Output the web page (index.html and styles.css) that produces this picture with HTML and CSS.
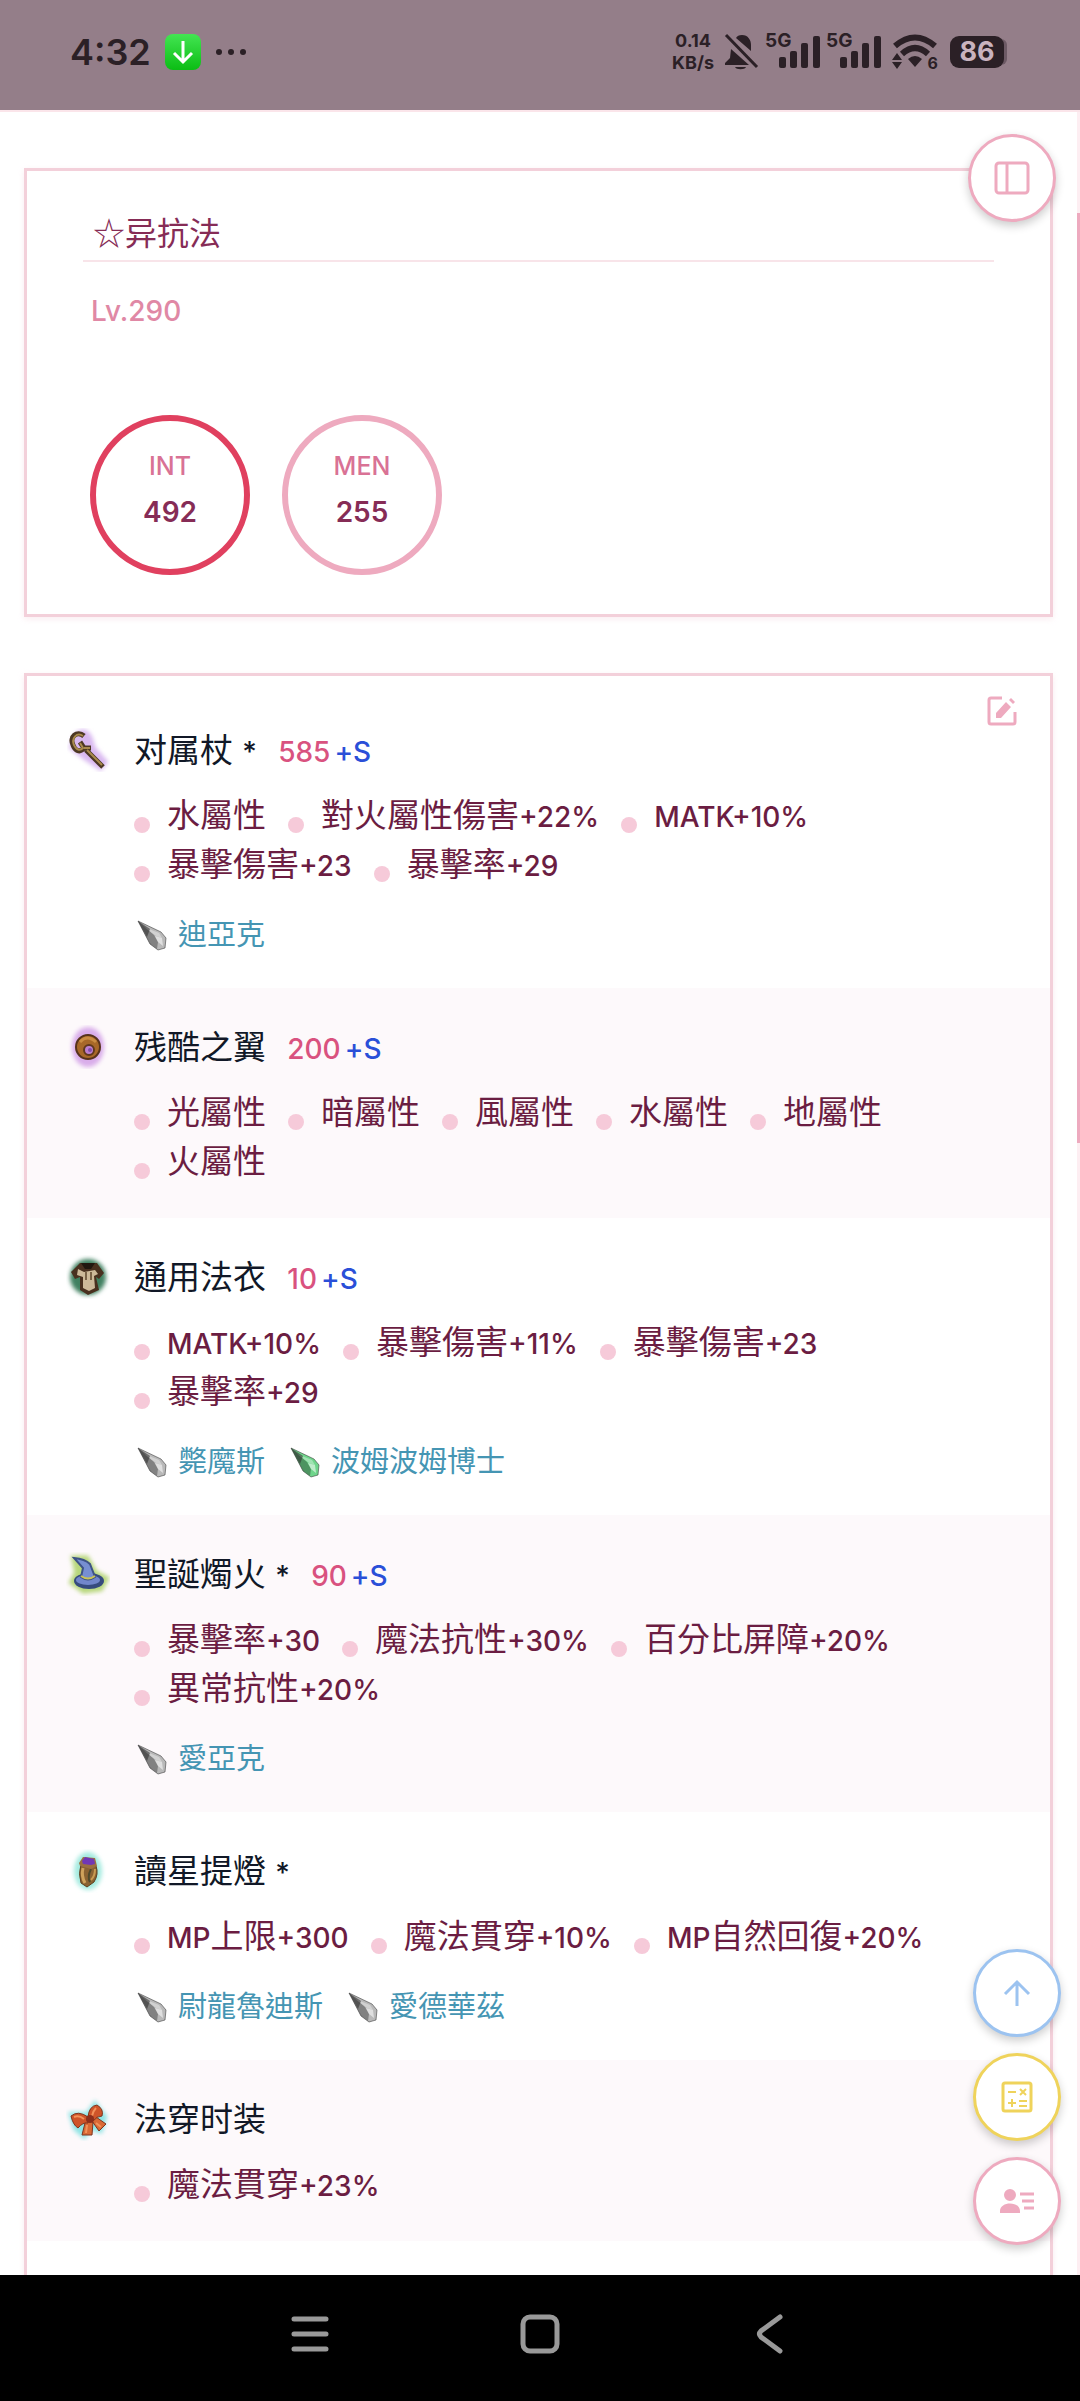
FILE: index.html
```
<!DOCTYPE html>
<html lang="zh-Hant">
<head>
    <meta charset="utf-8">
    <meta name="viewport" content="width=device-width, initial-scale=1">
    <title>☆异抗法</title>
    <link rel="stylesheet" href="styles.css">
</head>
<body>
    <!-- shared icon shapes -->
    <svg class="defs" width="0" height="0" aria-hidden="true">
        <defs>
            <filter id="glow" x="-30%" y="-30%" width="160%" height="160%"><feGaussianBlur stdDeviation="2"/></filter>
            <symbol id="crystal" viewBox="0 0 36 36">
                <path d="M4 4 L27 15 L32 21 L31 31 L24 33 L16 27 Z" fill="currentColor"/>
                <path d="M4 4 L20 18 L24 25 L23 32 L16 27 Z" fill="#000" opacity=".3"/>
                <path d="M10 10 L25 16 L28 21 L22 19 Z" fill="#fff" opacity=".35"/>
                <path d="M21 19 L28 21 L29 29 L24 25 Z" fill="#fff" opacity=".55"/>
                <path d="M4 4 L27 15 L32 21 L31 31 L24 33 L16 27 Z" fill="none" stroke="#333" stroke-opacity=".55" stroke-width="1"/>
                <path d="M4 4 L16 12 L13 20 Z" fill="#333" opacity=".6"/>
            </symbol>
            <symbol id="signal" viewBox="0 0 56 38">
                <rect x="14" y="24" width="7" height="11" rx="2"/>
                <rect x="25" y="18" width="7" height="17" rx="2"/>
                <rect x="36" y="10" width="7" height="25" rx="2"/>
                <rect x="48" y="3" width="7" height="32" rx="2"/>
            </symbol>
        </defs>
    </svg>

    <header class="status-bar">
        <span class="clock">4:32</span>
        <svg class="app-badge" viewBox="0 0 36 36">
            <defs>
                <linearGradient id="green" x1="0" y1="0" x2="0" y2="1"><stop offset="0" stop-color="#43e552"/><stop offset="1" stop-color="#0bbd14"/></linearGradient>
            </defs>
            <rect width="36" height="36" rx="8" fill="url(#green)"/>
            <path d="M18 7v21M9 19l9 9 9-9" fill="none" stroke="#fff" stroke-width="3"/>
        </svg>
        <svg class="more" viewBox="0 0 32 8"><circle cx="4" cy="4" r="3"/><circle cx="16" cy="4" r="3"/><circle cx="28" cy="4" r="3"/></svg>
        <div class="status-right">
            <span class="speed">0.14<br>KB/s</span>
            <svg class="bell" viewBox="0 0 36 38">
                <path d="M12 5C13 3 15 2 18 2C24 2 27 7 27 12V18ZM7 16L25 32H1V30L6 25Z"/>
                <path d="M11 34h11c-1 3-10 3-11 0Z"/>
                <path d="M2 2L33 34" stroke="#2b2026" stroke-width="3"/>
            </svg>
            <span class="network"><b>5G</b><svg viewBox="0 0 56 38"><use href="#signal"/></svg></span>
            <span class="network"><b>5G</b><svg viewBox="0 0 56 38"><use href="#signal"/></svg></span>
            <span class="wifi">
                <svg viewBox="0 0 46 38">
                    <path d="M3 13Q23 -4 43 13" fill="none" stroke="#2b2026" stroke-width="6"/>
                    <path d="M10 21Q23 9 36 21" fill="none" stroke="#2b2026" stroke-width="6"/>
                    <path d="M16 26Q23 20 30 26L23 34Z"/>
                    <path d="M0 27L5 20L10 27ZM0 29L5 36L10 29Z"/>
                </svg>
                <b>6</b>
            </span>
            <span class="battery">86</span>
        </div>
    </header>

    <main class="page">
        <section class="card profile">
            <h1>☆异抗法</h1>
            <p class="level">Lv.290</p>
            <div class="stats">
                <div class="stat main"><span>INT</span><strong>492</strong></div>
                <div class="stat"><span>MEN</span><strong>255</strong></div>
            </div>
        </section>

        <section class="card equipment">
            <button type="button" class="edit" aria-label="edit">
                <svg viewBox="0 0 32 32">
                    <path d="M16 3H5a2 2 0 0 0-2 2v22a2 2 0 0 0 2 2h22a2 2 0 0 0 2-2V17" fill="none" stroke="currentColor" stroke-width="3"/>
                    <path d="M10 23v-5L20 7l5 5L15 23ZM23 5l2-2 4 4-2 2Z" fill="currentColor"/>
                </svg>
            </button>

            <article class="item">
                <svg class="item-icon" viewBox="0 0 44 44">
                    <path d="M13 10Q18 4 21 12L24 22L38 38L20 26L10 18Z" fill="#d9b8f0" stroke="#d9b8f0" stroke-width="12" filter="url(#glow)"/>
                    <path d="M18 8C11 2 3 9 7 17C9 23 14 25 18 20L14 14M18 20L25 20M20 22L37 39" fill="none" stroke="#4d3824" stroke-width="5"/>
                    <path d="M17 8C11 4 5 10 8 17C10 22 14 23 17 20L14 15M18 20L24 20M21 22L36 37" fill="none" stroke="#a98a4c" stroke-width="2"/>
                </svg>
                <div class="item-body">
                    <h2>对属杖 <span class="latin">*</span> <span class="value">585</span><span class="refine">+S</span></h2>
                    <ul class="attrs">
                        <li>水屬性</li>
                        <li>對火屬性傷害<span class="latin">+22%</span></li>
                        <li><span class="latin">MATK+10%</span></li>
                        <li>暴擊傷害<span class="latin">+23</span></li>
                        <li>暴擊率<span class="latin">+29</span></li>
                    </ul>
                    <div class="crystals">
                        <span class="crystal"><svg><use href="#crystal"/></svg>迪亞克</span>
                    </div>
                </div>
            </article>

            <article class="item">
                <svg class="item-icon" viewBox="0 0 44 44">
                    <ellipse cx="22" cy="22" rx="16" ry="20" fill="#d9adea" filter="url(#glow)"/>
                    <circle cx="22" cy="22" r="12" fill="#a76828" stroke="#57331c" stroke-width="2"/>
                    <path d="M14 17Q21 9 30 17" fill="none" stroke="#c98c42" stroke-width="3"/>
                    <circle cx="23" cy="25" r="5" fill="#bc7fd0" stroke="#60381e" stroke-width="2"/>
                    <circle cx="24" cy="25" r="2" fill="#8250ac"/>
                </svg>
                <div class="item-body">
                    <h2>残酷之翼 <span class="value">200</span><span class="refine">+S</span></h2>
                    <ul class="attrs">
                        <li>光屬性</li>
                        <li>暗屬性</li>
                        <li>風屬性</li>
                        <li>水屬性</li>
                        <li>地屬性</li>
                        <li>火屬性</li>
                    </ul>
                </div>
            </article>

            <article class="item">
                <svg class="item-icon" viewBox="0 0 44 44">
                    <circle cx="22" cy="22" r="18" fill="#3f8060" filter="url(#glow)"/>
                    <path d="M14 8L31 8L38 18L33 24L30 22L33 35L22 40L14 35L14 22L9 24L5 17Z" fill="#49301f"/>
                    <path d="M12 14L18 17L29 15L32 19L28 21L29 33L23 36L17 33L17 22L11 20Z" fill="#cdb999"/>
                    <path d="M15 8h14l-4 6-6 0Z" fill="#21170f"/>
                    <path d="M20 17v8M25 17v8" stroke="#7a6348" stroke-width="2"/>
                </svg>
                <div class="item-body">
                    <h2>通用法衣 <span class="value">10</span><span class="refine">+S</span></h2>
                    <ul class="attrs">
                        <li><span class="latin">MATK+10%</span></li>
                        <li>暴擊傷害<span class="latin">+11%</span></li>
                        <li>暴擊傷害<span class="latin">+23</span></li>
                        <li>暴擊率<span class="latin">+29</span></li>
                    </ul>
                    <div class="crystals">
                        <span class="crystal"><svg><use href="#crystal"/></svg>斃魔斯</span>
                        <span class="crystal green"><svg><use href="#crystal"/></svg>波姆波姆博士</span>
                    </div>
                </div>
            </article>

            <article class="item">
                <svg class="item-icon" viewBox="0 0 44 44">
                    <path d="M9 7L20 7L28 21L39 27L34 36L18 38L7 30L12 21Z" fill="#b7d77b" stroke="#b7d77b" stroke-width="7" filter="url(#glow)"/>
                    <ellipse cx="23" cy="29" rx="15" ry="8" fill="#364b7e"/>
                    <ellipse cx="22" cy="28" rx="12" ry="5" fill="#7186cb"/>
                    <path d="M8 6Q19 7 24 12L29 25Q22 30 15 25L17 16Z" fill="#778fd2" stroke="#3e5386" stroke-width="2"/>
                    <path d="M15 24Q22 29 29 24" fill="none" stroke="#c9c357" stroke-width="2"/>
                </svg>
                <div class="item-body">
                    <h2>聖誕燭火 <span class="latin">*</span> <span class="value">90</span><span class="refine">+S</span></h2>
                    <ul class="attrs">
                        <li>暴擊率<span class="latin">+30</span></li>
                        <li>魔法抗性<span class="latin">+30%</span></li>
                        <li>百分比屏障<span class="latin">+20%</span></li>
                        <li>異常抗性<span class="latin">+20%</span></li>
                    </ul>
                    <div class="crystals">
                        <span class="crystal"><svg><use href="#crystal"/></svg>愛亞克</span>
                    </div>
                </div>
            </article>

            <article class="item">
                <svg class="item-icon" viewBox="0 0 44 44">
                    <ellipse cx="22" cy="22" rx="14" ry="19" fill="#a5ebe0" filter="url(#glow)"/>
                    <path d="M15 15Q12 25 15 34L21 38L28 33Q33 25 30 17Z" fill="#8a6232" stroke="#5e4020" stroke-width="1"/>
                    <path d="M17 19Q15 27 19 34" fill="none" stroke="#cfa25c" stroke-width="3"/>
                    <path d="M25 20Q21 28 24 33" fill="none" stroke="#4f4a2c" stroke-width="2"/>
                    <path d="M29 20Q29 27 25 31" fill="none" stroke="#c99a51" stroke-width="2"/>
                    <path d="M13 14L17 8L29 9L31 17L25 20L14 17Z" fill="#9b7040"/>
                    <path d="M16 12L19 8L28 10L29 15L25 16L17 15Z" fill="#7137b5"/>
                </svg>
                <div class="item-body">
                    <h2>讀星提燈 <span class="latin">*</span></h2>
                    <ul class="attrs">
                        <li><span class="latin">MP</span>上限<span class="latin">+300</span></li>
                        <li>魔法貫穿<span class="latin">+10%</span></li>
                        <li><span class="latin">MP</span>自然回復<span class="latin">+20%</span></li>
                    </ul>
                    <div class="crystals">
                        <span class="crystal"><svg><use href="#crystal"/></svg>尉龍魯迪斯</span>
                        <span class="crystal"><svg><use href="#crystal"/></svg>愛德華茲</span>
                    </div>
                </div>
            </article>

            <article class="item">
                <svg class="item-icon" viewBox="0 0 44 44">
                    <path d="M6 18L22 18L29 8L38 20L34 33L24 30L18 38L10 31Z" fill="#8fe4e4" stroke="#8fe4e4" stroke-width="6" filter="url(#glow)"/>
                    <path d="M20 22L16 38L26 38L27 25ZM26 24L33 34L40 27L30 20Z" fill="#d96a35" stroke="#7e3520" stroke-width="1"/>
                    <path d="M22 20Q12 13 5 19Q7 28 12 31Q17 25 22 26ZM22 20Q23 9 31 8Q38 12 36 19Q31 19 27 24Z" fill="#cf5429" stroke="#7e3520" stroke-width="1"/>
                    <path d="M8 20Q13 18 18 22M30 11Q27 14 26 19M21 28L20 36M30 26L35 30" fill="none" stroke="#f3925a" stroke-width="2"/>
                    <circle cx="24" cy="22" r="4" fill="#8d2f1b"/>
                </svg>
                <div class="item-body">
                    <h2>法穿时装</h2>
                    <ul class="attrs">
                        <li>魔法貫穿<span class="latin">+23%</span></li>
                    </ul>
                </div>
            </article>
        </section>

        <div class="scroll-track"><div class="scroll-thumb"></div></div>

        <button type="button" class="fab fab-menu" aria-label="sidebar">
            <svg viewBox="0 0 36 36"><rect x="2" y="3" width="32" height="30" rx="3"/><path d="M13 3v30"/></svg>
        </button>
        <div class="fab-group">
            <button type="button" class="fab blue" aria-label="top">
                <svg viewBox="0 0 36 36"><path d="M18 31V7M6 19L18 7l12 12"/></svg>
            </button>
            <button type="button" class="fab yellow" aria-label="calculator">
                <svg viewBox="0 0 36 36"><rect x="4" y="4" width="28" height="28" rx="2"/><path d="M9 13h8M21 10l6 6M27 10l-6 6M9 24h8M13 20v8M20 22h8M20 27h8" stroke-width="2"/></svg>
            </button>
            <button type="button" class="fab" aria-label="character">
                <svg viewBox="0 0 36 36"><path class="solid" d="M11 6a6 6 0 1 1 0 12a6 6 0 1 1 0-12ZM1 30v-2c0-10 20-10 20 0v2Z"/><path d="M21 11h14M23 18h12M25 25h10"/></svg>
            </button>
        </div>
    </main>

    <nav class="nav-bar">
        <button type="button" aria-label="menu"><svg viewBox="0 0 44 44"><path d="M6 7h32M6 22h32M6 37h32"/></svg></button>
        <button type="button" aria-label="home"><svg viewBox="0 0 44 44"><rect x="5" y="5" width="34" height="34" rx="7"/></svg></button>
        <button type="button" aria-label="back"><svg viewBox="0 0 44 44"><path d="M32 5L13 19q-3 3 0 6L32 39"/></svg></button>
    </nav>
</body>
</html>
```
FILE: styles.css
```
* {
    box-sizing: border-box;
}

body {
    margin: 0;
    height: 100vh;
    display: flex;
    flex-direction: column;
    font-family: Inter, "Noto Sans CJK TC", sans-serif;
    color: #6b1d42;
    background-color: #fff;
}

h1,
h2,
p,
ul {
    margin: 0;
    padding: 0;
    font-weight: 400;
}

button {
    padding: 0;
    border: none;
    background: none;
    cursor: pointer;
}

.defs {
    position: absolute;
}

/* status bar */
.status-bar {
    flex: none;
    display: flex;
    align-items: center;
    height: 110px;
    padding: 0 76px 6px 70px;
    background-color: #947e89;
    color: #2b2026;
    fill: #2b2026;
}

.clock {
    font-size: 36px;
    font-weight: 600;
}

.app-badge {
    width: 36px;
    height: 36px;
    margin-left: 14px;
}

.more {
    width: 32px;
    height: 8px;
    margin-left: 14px;
}

.status-right {
    display: flex;
    align-items: center;
    margin-left: auto;
}

.speed {
    font-size: 18px;
    line-height: 22px;
    font-weight: 700;
    text-align: center;
}

.bell {
    width: 36px;
    height: 38px;
    margin-left: 10px;
}

.network {
    position: relative;
    width: 56px;
    height: 38px;
    margin-left: 5px;
}

.network b {
    position: absolute;
    top: -2px;
    left: 0;
    font-size: 19px;
    line-height: 20px;
}

.network svg {
    width: 56px;
    height: 38px;
}

.wifi {
    position: relative;
    width: 46px;
    height: 38px;
    margin-left: 10px;
}

.wifi svg {
    width: 46px;
    height: 38px;
}

.wifi b {
    position: absolute;
    right: 0;
    bottom: 0;
    font-size: 16px;
    line-height: 16px;
}

.battery {
    width: 54px;
    height: 32px;
    margin-left: 12px;
    border-radius: 9px;
    background-color: #2b2026;
    box-shadow: 6px 0 0 -3px #6d5a65;
    color: #c9b3bf;
    font-size: 27px;
    line-height: 32px;
    font-weight: 700;
    text-align: center;
}

/* page */
.page {
    position: relative;
    flex: 1;
    min-height: 0;
    padding: 56px 27px 0 24px;
    border-top: 2px solid #fbe5ea;
    overflow: hidden;
}

.card {
    position: relative;
    border: 3px solid #f3d0da;
    box-shadow: 0 2px 6px rgba(243, 208, 218, 0.4);
}

.profile {
    margin-bottom: 56px;
    padding: 36px 56px 39px;
}

.profile h1 {
    padding: 0 10px 4px;
    border-bottom: 2px solid #f8e4e9;
    color: #862c56;
    font-family: "Noto Sans CJK TC", sans-serif;
    font-size: 32px;
    line-height: 49px;
}

.level {
    margin: 28px 8px 0;
    color: #e088a5;
    font-size: 28px;
    line-height: 42px;
    font-weight: 500;
}

.stats {
    display: flex;
    gap: 32px;
    margin: 83px 7px 0;
}

.stat {
    display: flex;
    flex-direction: column;
    align-items: center;
    width: 160px;
    height: 160px;
    padding-top: 22px;
    border: 6px solid #eeaabf;
    border-radius: 50%;
}

.stat.main {
    border-color: #e0405f;
}

.stat span {
    color: #d97295;
    font-size: 25px;
    line-height: 46px;
    font-weight: 500;
}

.stat strong {
    color: #862c56;
    font-size: 28px;
    line-height: 46px;
    font-weight: 600;
}

/* equipment list */
.equipment {
    padding-top: 15px;
    padding-bottom: 80px;
}

.edit {
    position: absolute;
    top: 19px;
    right: 32px;
    color: #eeaabf;
}

.edit svg {
    display: block;
    width: 32px;
    height: 32px;
}

.item {
    display: flex;
    gap: 24px;
    padding: 34px 41px 32px 39px;
}

.item:nth-of-type(even) {
    background-color: #fdf9fb;
}

.item-icon {
    flex: none;
    width: 44px;
    height: 44px;
    margin-top: 3px;
}

.item-body {
    flex: 1;
    font-size: 33px;
}

.item h2 {
    height: 50px;
    margin-bottom: 16px;
    color: #111827;
    font-size: 33px;
    line-height: 50px;
}

.latin,
.value,
.refine {
    font-size: 28px;
    font-weight: 500;
}

.value {
    margin-left: 12px;
    color: #d9527f;
}

.refine {
    margin-left: 4px;
    color: #2a4fd8;
}

.attrs {
    display: flex;
    flex-wrap: wrap;
    column-gap: 22px;
    list-style: none;
}

.attrs li {
    height: 49px;
    line-height: 49px;
}

.attrs li::before {
    content: "";
    display: inline-block;
    width: 16px;
    height: 16px;
    margin-right: 17px;
    border-radius: 50%;
    background-color: #f6cad9;
    vertical-align: -6px;
}

.crystals {
    display: flex;
    gap: 22px;
    margin-top: 24px;
}

.crystal {
    display: flex;
    align-items: center;
    gap: 8px;
    color: #4595b3;
    font-size: 29px;
    line-height: 43px;
}

.crystal svg {
    width: 36px;
    height: 36px;
    color: #b9b9b9;
}

.crystal.green svg {
    color: #6fd58b;
}

/* scrollbar and floating buttons */
.scroll-track {
    position: absolute;
    top: 0;
    right: 0;
    bottom: 0;
    width: 3px;
    background-color: #fdeef2;
}

.scroll-thumb {
    height: 43%;
    margin-top: 101px;
    background-color: #eeaabf;
}

.fab {
    display: flex;
    align-items: center;
    justify-content: center;
    width: 88px;
    height: 88px;
    border: 3px solid #eeaabf;
    border-radius: 50%;
    background-color: #fff;
    box-shadow: 0 4px 10px rgba(0, 0, 0, 0.2);
    color: #eeaabf;
}

.fab svg {
    width: 36px;
    height: 36px;
    fill: none;
    stroke: currentColor;
    stroke-width: 3;
}

.fab .solid {
    fill: currentColor;
    stroke: none;
}

.fab.blue {
    border-color: #9cc3f0;
    color: #9cc3f0;
}

.fab.yellow {
    border-color: #efd35b;
    color: #efd35b;
}

.fab-menu {
    position: absolute;
    top: 22px;
    right: 24px;
}

.fab-group {
    position: absolute;
    right: 19px;
    bottom: 30px;
    display: flex;
    flex-direction: column;
    gap: 16px;
}

/* system navigation */
.nav-bar {
    flex: none;
    display: flex;
    align-items: center;
    justify-content: center;
    gap: 186px;
    height: 126px;
    padding-bottom: 8px;
    background-color: #000;
}

.nav-bar svg {
    display: block;
    width: 44px;
    height: 44px;
    fill: none;
    stroke: #999;
    stroke-width: 5;
    stroke-linecap: round;
}
```
